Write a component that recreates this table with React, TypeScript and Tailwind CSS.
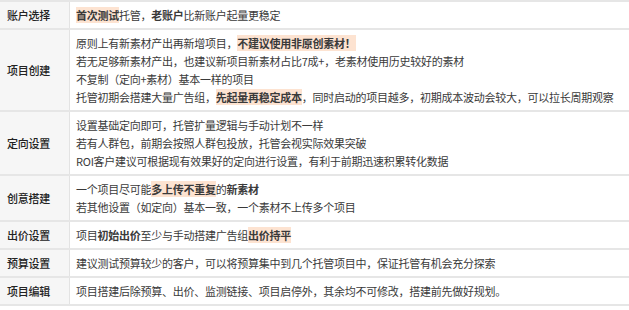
const Hl = ({ children }: { children: React.ReactNode }) => (
  <span className="bg-[#fde3d1] font-semibold">{children}</span>
)

const B = ({ children }: { children: React.ReactNode }) => <span className="font-semibold">{children}</span>

const rows: { label: string; lines: React.ReactNode[] }[] = [
  {
    label: "账户选择",
    lines: [
      <>
        <Hl>首次测试</Hl>托管，<B>老账户</B>比新账户起量更稳定
      </>,
    ],
  },
  {
    label: "项目创建",
    lines: [
      <>
        原则上有新素材产出再新增项目，<Hl>不建议使用非原创素材！</Hl>
      </>,
      "若无足够新素材产出，也建议新项目新素材占比7成+，老素材使用历史较好的素材",
      "不复制（定向+素材）基本一样的项目",
      <>
        托管初期会搭建大量广告组，<Hl>先起量再稳定成本</Hl>，同时启动的项目越多，初期成本波动会较大，可以拉长周期观察
      </>,
    ],
  },
  {
    label: "定向设置",
    lines: [
      "设置基础定向即可，托管扩量逻辑与手动计划不一样",
      "若有人群包，前期会按照人群包投放，托管会视实际效果突破",
      "ROI客户建议可根据现有效果好的定向进行设置，有利于前期迅速积累转化数据",
    ],
  },
  {
    label: "创意搭建",
    lines: [
      <>
        一个项目尽可能<Hl>多上传不重复</Hl>的<B>新素材</B>
      </>,
      "若其他设置（如定向）基本一致，一个素材不上传多个项目",
    ],
  },
  {
    label: "出价设置",
    lines: [
      <>
        项目<B>初始出价</B>至少与手动搭建广告组<Hl>出价持平</Hl>
      </>,
    ],
  },
  {
    label: "预算设置",
    lines: ["建议测试预算较少的客户，可以将预算集中到几个托管项目中，保证托管有机会充分探索"],
  },
  {
    label: "项目编辑",
    lines: ["项目搭建后除预算、出价、监测链接、项目启停外，其余均不可修改，搭建前先做好规划。"],
  },
]

export default function App() {
  return (
    <div
      className="h-[310px] w-[629px] overflow-hidden bg-white text-[11px] leading-[18px] tracking-[-0.25px] text-[#3a3a3a]"
      style={{ fontFamily: '"Noto Sans CJK SC", "Noto Sans", sans-serif' }}
    >
      <div className="border-t-2 border-[#e6e6e6]">
        {rows.map((row) => (
          <div key={row.label} className="flex border-b-2 border-[#e6e6e6]">
            <div className="flex w-[70px] shrink-0 items-center border-r border-[#e3e3e3] bg-[#f6f6f6] pl-[7px] font-medium text-[#222]">
              {row.label}
            </div>
            <div className="flex-1 whitespace-nowrap px-[6px] py-[4px]">
              {row.lines.map((line, i) => (
                <div key={i}>{line}</div>
              ))}
            </div>
          </div>
        ))}
      </div>
    </div>
  )
}
